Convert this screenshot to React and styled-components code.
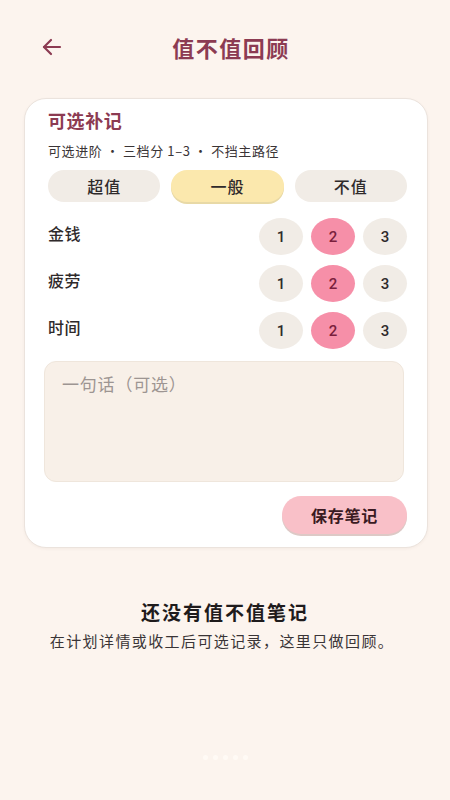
import React, { useState } from 'react';
import styled, { createGlobalStyle } from 'styled-components';

const GlobalStyle = createGlobalStyle`
  html, body {
    margin: 0;
    padding: 0;
    background: #fcf4ee;
  }
  body {
    font-family: "Noto Sans CJK SC", "Noto Sans", sans-serif;
  }
  * { box-sizing: border-box; }
`;

const Page = styled.div`
  width: 450px;
  height: 800px;
  background: #fcf4ee;
  display: flex;
  flex-direction: column;
  overflow: hidden;
`;

const Header = styled.header`
  padding: 22px 0 0 0;
  display: grid;
  grid-template-columns: 94px 1fr 82px;
  align-items: center;
  height: 72px;
  margin-bottom: 26px;
`;

const BackButton = styled.button`
  border: 0;
  background: none;
  padding: 0 0 0 40px;
  display: flex;
  align-items: center;
  cursor: pointer;
  color: #8c3b52;
`;

const Title = styled.h1`
  margin: 0;
  text-align: center;
  font-size: 22px;
  font-weight: 700;
  color: #8c3b52;
  letter-spacing: 1.5px;
`;

const Card = styled.section`
  margin: 0 22px 0 24px;
  background: #fff;
  border: 1px solid #ebe3dd;
  border-radius: 22px;
  padding: 8px 20px 13px 20px;
  box-shadow: 0 1px 3px rgba(120, 80, 60, 0.06);
`;

const CardTitle = styled.h2`
  margin: 0 0 0 3px;
  font-size: 18px;
  font-weight: 700;
  color: #8c3b52;
  letter-spacing: 0.6px;
  line-height: 26px;
`;

const CardHint = styled.p`
  margin: 8px 0 0 3px;
  font-size: 13px;
  color: #3a3436;
  letter-spacing: 0.6px;
  line-height: 20px;
`;

const Segments = styled.div`
  display: grid;
  grid-template-columns: repeat(3, 1fr);
  gap: 11px;
  margin: 9px 0 0 3px;
`;

const Segment = styled.button`
  height: 32px;
  border: 0;
  border-radius: 16px;
  font-family: inherit;
  font-size: 16px;
  font-weight: 500;
  letter-spacing: 1px;
  color: #2f2a2b;
  background: ${p => (p.$active ? '#fbe8ad' : '#f1ece6')};
  box-shadow: ${p => (p.$active ? '0 2px 0 #e8d9a6' : 'none')};
  cursor: pointer;
`;

const Rows = styled.div`
  display: flex;
  flex-direction: column;
  gap: 10px;
  margin-top: 16px;
`;

const ScoreRow = styled.div`
  display: flex;
  align-items: center;
  justify-content: space-between;
  height: 37px;
`;

const ScoreLabel = styled.span`
  margin: -8px 0 0 3px;
  font-size: 16px;
  font-weight: 500;
  letter-spacing: 0.5px;
  color: #2f2a2b;
`;

const Dots = styled.div`
  display: flex;
  gap: 8px;
`;

const Dot = styled.button`
  width: 44px;
  height: 37px;
  border: 0;
  border-radius: 50%;
  font-family: "Roboto", "Noto Sans", sans-serif;
  font-size: 15px;
  font-weight: 500;
  color: ${p => (p.$active ? '#7a1f3d' : '#2f2a2b')};
  background: ${p => (p.$active ? '#f68fa8' : '#f1ece6')};
  cursor: pointer;
`;

const NoteBox = styled.textarea`
  display: block;
  width: calc(100% - 2px);
  height: 121px;
  margin: 12px 0 0 -1px;
  border: 1px solid #efe6dc;
  border-radius: 12px;
  background: #f8f0e8;
  padding: 9px 17px;
  font-family: inherit;
  font-size: 17px;
  letter-spacing: 0.8px;
  color: #333;
  resize: none;
  outline: none;
  &::placeholder {
    color: #9d9592;
  }
`;

const Actions = styled.div`
  display: flex;
  justify-content: flex-end;
  margin-top: 14px;
`;

const SaveButton = styled.button`
  width: 125px;
  height: 38px;
  border: 0;
  border-radius: 19px;
  background: #f9c0c8;
  box-shadow: 0 2px 0 #ddc9c6;
  font-family: inherit;
  font-size: 16px;
  font-weight: 700;
  letter-spacing: 0.8px;
  color: #3a1a22;
  cursor: pointer;
`;

const Empty = styled.div`
  margin-top: 50px;
  display: flex;
  flex-direction: column;
  align-items: center;
`;

const EmptyTitle = styled.h3`
  margin: 0;
  font-size: 19px;
  font-weight: 700;
  letter-spacing: 2px;
  color: #1f1b1c;
  line-height: 28px;
`;

const EmptyText = styled.p`
  margin: 4px 0 0 -6px;
  font-size: 15px;
  letter-spacing: 1.4px;
  color: #3a3436;
  line-height: 22px;
`;

const Pager = styled.div`
  margin-top: auto;
  margin-bottom: 40px;
  display: flex;
  justify-content: center;
  gap: 5px;
`;

const PagerDot = styled.span`
  width: 5px;
  height: 5px;
  border-radius: 50%;
  background: #fffaf5;
`;

const ArrowLeft = () => (
  <svg width="24" height="24" viewBox="0 0 24 24" fill="none" stroke="currentColor"
    strokeWidth="2.2" strokeLinecap="round" strokeLinejoin="round">
    <path d="M20 12H4" />
    <path d="M11 5l-7 7 7 7" />
  </svg>
);

const verdicts = ['超值', '一般', '不值'];
const factors = ['金钱', '疲劳', '时间'];

export default function App() {
  const [verdict, setVerdict] = useState('一般');
  const [scores, setScores] = useState({ 金钱: 2, 疲劳: 2, 时间: 2 });

  return (
    <Page>
      <GlobalStyle />
      <Header>
        <BackButton aria-label="返回"><ArrowLeft /></BackButton>
        <Title>值不值回顾</Title>
        <span />
      </Header>

      <Card>
        <CardTitle>可选补记</CardTitle>
        <CardHint>可选进阶 · 三档分 1–3 · 不挡主路径</CardHint>
        <Segments>
          {verdicts.map(v => (
            <Segment key={v} $active={v === verdict} onClick={() => setVerdict(v)}>{v}</Segment>
          ))}
        </Segments>
        <Rows>
          {factors.map(f => (
            <ScoreRow key={f}>
              <ScoreLabel>{f}</ScoreLabel>
              <Dots>
                {[1, 2, 3].map(n => (
                  <Dot key={n} $active={scores[f] === n}
                    onClick={() => setScores({ ...scores, [f]: n })}>{n}</Dot>
                ))}
              </Dots>
            </ScoreRow>
          ))}
        </Rows>
        <NoteBox placeholder="一句话（可选）" />
        <Actions>
          <SaveButton>保存笔记</SaveButton>
        </Actions>
      </Card>

      <Empty>
        <EmptyTitle>还没有值不值笔记</EmptyTitle>
        <EmptyText>在计划详情或收工后可选记录，这里只做回顾。</EmptyText>
      </Empty>

      <Pager>
        {[0, 1, 2, 3, 4].map(i => <PagerDot key={i} />)}
      </Pager>
    </Page>
  );
}
